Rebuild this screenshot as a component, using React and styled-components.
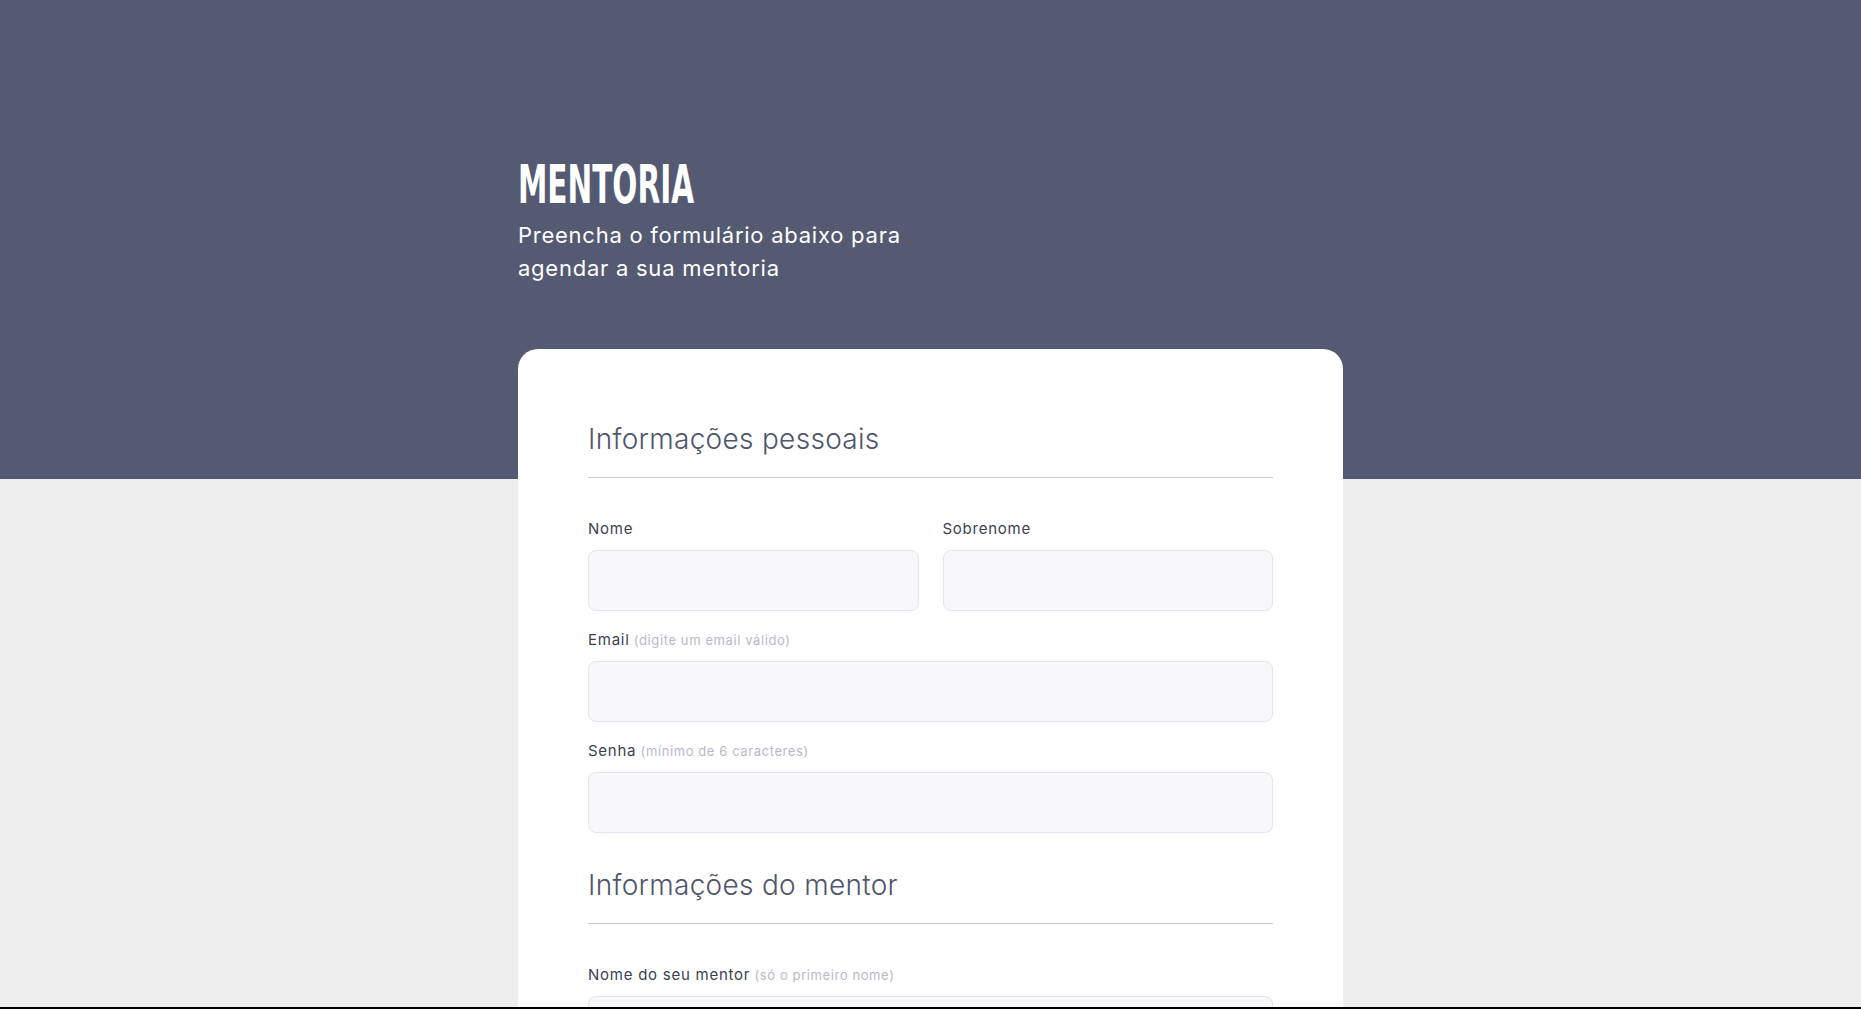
import React from "react";
import styled, { createGlobalStyle } from "styled-components";

const GlobalStyle = createGlobalStyle`
  html { scrollbar-width: none; }
  html::-webkit-scrollbar { display: none; }
  body {
    margin: 0;
    background: #eeeeee;
    font-family: Inter, "Noto Sans", sans-serif;
  }
  * { box-sizing: border-box; }
`;

const Page = styled.div`
  min-height: 100vh;
  padding-bottom: 80px;
`;

const Hero = styled.header`
  height: 479px;
  background: #535a72;
  padding-top: 169px;
`;

const Container = styled.div`
  width: 825px;
  margin: 0 auto;
`;

const Title = styled.h1`
  margin: 0;
  height: 40px;
  font-family: "Liberation Sans Narrow", "DejaVu Sans Condensed", "Liberation Sans", sans-serif;
  font-weight: 700;
  font-size: 40px;
  line-height: 40px;
  color: #ffffff;
  letter-spacing: 0;
  span {
    display: inline-block;
    transform: scale(0.82, 1.33);
    transform-origin: 0 34px;
  }
`;

const Subtitle = styled.p`
  margin: 10px 0 0;
  font-family: Inter, "Noto Sans", sans-serif;
  font-size: 22px;
  line-height: 33px;
  letter-spacing: 0.75px;
  font-weight: 400;
  color: #ffffff;
`;

const Card = styled.main`
  position: relative;
  margin: -130px auto 0;
  width: 825px;
  background: #ffffff;
  border-radius: 20px;
  padding: 70px 70px 80px;
  display: flex;
  flex-direction: column;
  gap: 32px;
`;

const Section = styled.section`
  display: flex;
  flex-direction: column;
`;

const SectionTitle = styled.h2`
  margin: 0 0 40px;
  padding-bottom: 18px;
  border-bottom: 1px solid #cccccc;
  font-family: Inter, "Noto Sans", sans-serif;
  font-size: 28px;
  line-height: 40px;
  letter-spacing: 0.3px;
  font-weight: 300;
  color: #4f556c;
`;

const Fields = styled.div`
  display: flex;
  flex-direction: column;
  gap: 18px;
`;

const Row = styled.div`
  display: grid;
  grid-template-columns: 1fr 1fr;
  gap: 24px;
`;

const Field = styled.label`
  display: flex;
  flex-direction: column;
  gap: 10px;
`;

const LabelText = styled.span`
  font-size: 15px;
  line-height: 22px;
  letter-spacing: 0.75px;
  font-weight: 400;
  color: #3c3f50;
`;

const Hint = styled.span`
  font-size: 13px;
  letter-spacing: 0.6px;
  color: #b9b8c9;
`;

const Input = styled.input`
  display: block;
  width: 100%;
  height: 61px;
  border: 1px solid #e4e3ef;
  border-radius: 8px;
  background: #f8f8fb;
  padding: 0 18px;
  font-family: inherit;
  font-size: 15px;
  color: #3c3f50;
  outline: none;
`;

const BottomEdge = styled.div`
  position: fixed;
  left: 0;
  right: 0;
  bottom: 0;
  height: 2px;
  background: #000000;
`;

function FormField({ label, hint, type = "text" }) {
  return (
    <Field>
      <LabelText>
        {label}
        {hint && <Hint> ({hint})</Hint>}
      </LabelText>
      <Input type={type} />
    </Field>
  );
}

export default function App() {
  return (
    <Page>
      <GlobalStyle />
      <Hero>
        <Container>
          <Title>
            <span>MENTORIA</span>
          </Title>
          <Subtitle>
            Preencha o formulário abaixo para
            <br />
            agendar a sua mentoria
          </Subtitle>
        </Container>
      </Hero>
      <Card>
        <Section>
          <SectionTitle>Informações pessoais</SectionTitle>
          <Fields>
            <Row>
              <FormField label="Nome" />
              <FormField label="Sobrenome" />
            </Row>
            <FormField label="Email" hint="digite um email válido" type="email" />
            <FormField label="Senha" hint="mínimo de 6 caracteres" type="password" />
          </Fields>
        </Section>
        <Section>
          <SectionTitle>Informações do mentor</SectionTitle>
          <Fields>
            <FormField label="Nome do seu mentor" hint="só o primeiro nome" />
          </Fields>
        </Section>
      </Card>
      <BottomEdge />
    </Page>
  );
}
